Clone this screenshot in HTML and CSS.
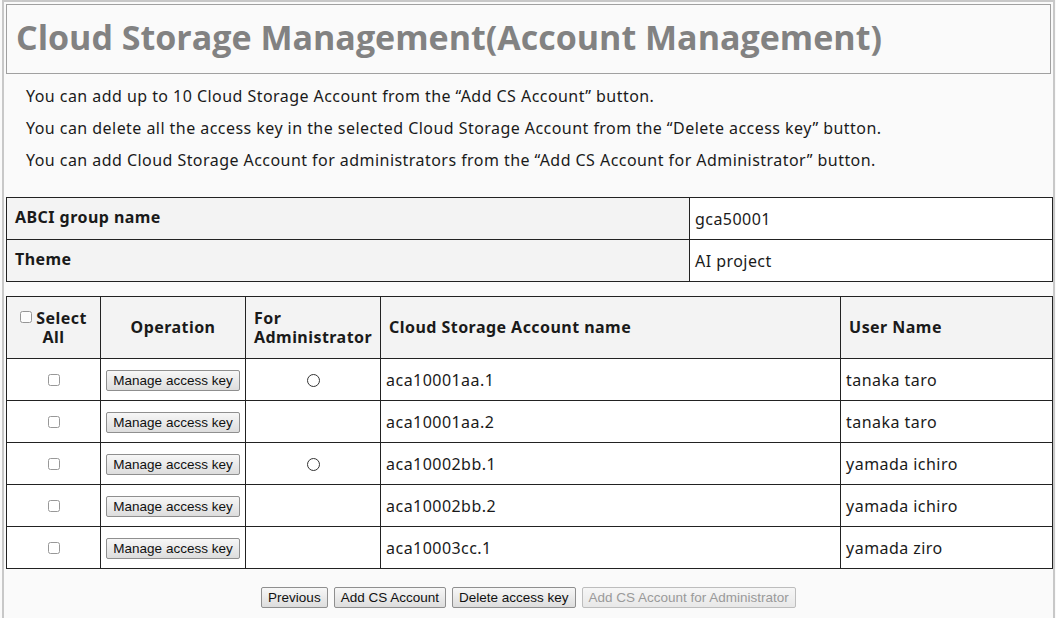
FILE: index.html
```html
<!DOCTYPE html>
<html>
<head>
<meta charset="utf-8">
<link rel="stylesheet" href="styles.css">
</head>
<body>
<div class="page">
  <div class="title-box"><h1>Cloud Storage Management(Account Management)</h1></div>
  <div class="notes">
    <p>You can add up to 10 Cloud Storage Account from the “Add CS Account” button.</p>
    <p>You can delete all the access key in the selected Cloud Storage Account from the “Delete access key” button.</p>
    <p>You can add Cloud Storage Account for administrators from the “Add CS Account for Administrator” button.</p>
  </div>
  <table class="info">
    <tr><th>ABCI group name</th><td>gca50001</td></tr>
    <tr><th>Theme</th><td>AI project</td></tr>
  </table>
  <table class="list">
    <thead>
      <tr>
        <th class="c-sel"><div class="sel"><input type="checkbox" class="cb head-cb"><span>Select</span></div><div>All</div></th>
        <th class="c-op">Operation</th>
        <th class="c-adm left">For<br>Administrator</th>
        <th class="c-name left">Cloud Storage Account name</th>
        <th class="c-user left">User Name</th>
      </tr>
    </thead>
    <tbody>
      <tr><td class="center"><input type="checkbox" class="cb"></td><td class="center"><button class="btn">Manage access key</button></td><td class="center"><span class="circ"></span></td><td>aca10001aa.1</td><td>tanaka taro</td></tr>
      <tr><td class="center"><input type="checkbox" class="cb"></td><td class="center"><button class="btn">Manage access key</button></td><td class="center"></td><td>aca10001aa.2</td><td>tanaka taro</td></tr>
      <tr><td class="center"><input type="checkbox" class="cb"></td><td class="center"><button class="btn">Manage access key</button></td><td class="center"><span class="circ"></span></td><td>aca10002bb.1</td><td>yamada ichiro</td></tr>
      <tr><td class="center"><input type="checkbox" class="cb"></td><td class="center"><button class="btn">Manage access key</button></td><td class="center"></td><td>aca10002bb.2</td><td>yamada ichiro</td></tr>
      <tr><td class="center"><input type="checkbox" class="cb"></td><td class="center"><button class="btn">Manage access key</button></td><td class="center"></td><td>aca10003cc.1</td><td>yamada ziro</td></tr>
    </tbody>
  </table>
  <div class="actions">
    <button class="btn">Previous</button>
    <button class="btn">Add CS Account</button>
    <button class="btn">Delete access key</button>
    <button class="btn" disabled>Add CS Account for Administrator</button>
  </div>
</div>
</body>
</html>
```
FILE: styles.css
```css
html, body {
  margin: 0;
  padding: 0;
  background: #fafafa;
}
body {
  font-family: "Noto Sans", "Open Sans", sans-serif;
  color: #1a1a1a;
  width: 1056px;
  height: 618px;
  overflow: hidden;
}
.page {
  box-sizing: border-box;
  margin-left: 2px;
  width: 1053px;
  height: 618px;
  border-top: 2px solid #c8c8c8;
  border-left: 2px solid #c8c8c8;
  border-right: 2px solid #c8c8c8;
  padding: 2px 2px 0 2px;
  background: #fafafa;
}
.title-box {
  border: 1px solid #a0a0a0;
  height: 68px;
  box-sizing: content-box;
  display: flex;
  align-items: center;
  padding-left: 9px;
}
h1 {
  margin: -4px 0 0 0;
  font-family: "Open Sans", "Noto Sans", sans-serif;
  font-weight: bold;
  font-size: 34px;
  color: #828282;
}
.notes {
  padding: 6px 0 0 20px;
  height: 123px;
  box-sizing: border-box;
}
.notes p {
  margin: 0;
  font-size: 16px;
  letter-spacing: 0.45px;
  line-height: 32px;
}
table {
  border-collapse: collapse;
  width: 1047px;
  font-size: 16px;
  letter-spacing: 0.45px;
}
.info th, .info td {
  border: 1px solid #222;
  height: 42px;
  box-sizing: border-box;
  padding: 0 0 0 8px;
  text-align: left;
}
.info th {
  background: #f3f3f3;
  width: 683px;
  vertical-align: top;
  padding-top: 8px;
  font-weight: bold;
}
.info td {
  background: #fff;
  padding-left: 5px;
}
.list {
  margin-top: 14px;
}
.list th, .list td {
  border: 1px solid #222;
  box-sizing: border-box;
}
.list th {
  background: #f3f3f3;
  height: 62px;
  font-weight: bold;
  line-height: 19px;
  padding: 0 8px;
  text-align: center;
}
.list th.left { text-align: left; }
.c-sel { width: 94px; }
.c-op { width: 145px; }
.c-adm { width: 135px; }
.c-name { width: 460px; }
.sel {
  display: flex;
  align-items: center;
  justify-content: center;
  gap: 4px;
}
.list td {
  background: #fff;
  height: 42px;
  padding: 0 5px;
  text-align: left;
}
.list td.center { text-align: center; }
.cb {
  width: 12px;
  height: 12px;
  margin: 0;
  vertical-align: 0;
  opacity: 0.75;
}
.head-cb {
  margin-top: -3px;
}
.circ {
  display: inline-block;
  width: 11px;
  height: 11px;
  border: 1px solid #333;
  border-radius: 50%;
  vertical-align: -1px;
}
.btn {
  font-family: "Liberation Sans", Arial, sans-serif;
  font-size: 13.5px;
  letter-spacing: 0;
  color: #111;
  background: linear-gradient(#f7f7f7, #dddddd);
  border: 1px solid #8f8f8f;
  border-radius: 2px;
  padding: 0 6px;
  height: 21px;
  line-height: 19px;
}
.btn:disabled {
  color: #9a9a9a;
  border-color: #bdbdbd;
  background: linear-gradient(#f6f6f6, #e8e8e8);
}
.actions {
  display: flex;
  justify-content: center;
  gap: 6px;
  margin-top: 18px;
}
```
